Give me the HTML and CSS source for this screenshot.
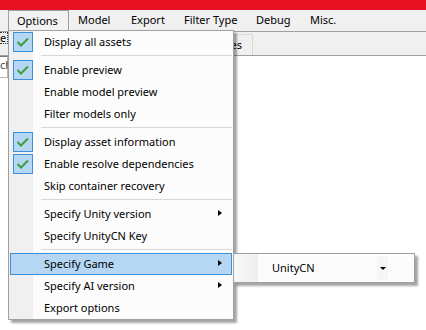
FILE: index.html
```html
<!DOCTYPE html>
<html>
<head>
<meta charset="utf-8">
<link rel="stylesheet" href="styles.css">
</head>
<body>
<div class="titlebar"></div>
<div class="menubar">
  <div class="mi mi-options open">Options</div>
  <div class="mi mi-model">Model</div>
  <div class="mi mi-export">Export</div>
  <div class="mi mi-filter">Filter Type</div>
  <div class="mi mi-debug">Debug</div>
  <div class="mi mi-misc">Misc.</div>
</div>
<div class="toolstrip">
  <div class="frag-tab"><span class="focus">e</span></div>
  <div class="tab">Classes</div>
</div>
<div class="content">
  <div class="search">ch</div>
</div>

<div class="dropdown">
  <div class="margin"></div>
  <div class="item"><span class="check"><svg width="18" height="18" viewBox="0 0 18 18"><polyline points="3.5,9 7,12.5 14,5.5" fill="none" stroke="#3d9e3d" stroke-width="2"/></svg></span><span class="label">Display all assets</span></div>
  <div class="sep"></div>
  <div class="item"><span class="check"><svg width="18" height="18" viewBox="0 0 18 18"><polyline points="3.5,9 7,12.5 14,5.5" fill="none" stroke="#3d9e3d" stroke-width="2"/></svg></span><span class="label">Enable preview</span></div>
  <div class="item"><span class="label">Enable model preview</span></div>
  <div class="item"><span class="label">Filter models only</span></div>
  <div class="sep"></div>
  <div class="item"><span class="check"><svg width="18" height="18" viewBox="0 0 18 18"><polyline points="3.5,9 7,12.5 14,5.5" fill="none" stroke="#3d9e3d" stroke-width="2"/></svg></span><span class="label">Display asset information</span></div>
  <div class="item"><span class="check"><svg width="18" height="18" viewBox="0 0 18 18"><polyline points="3.5,9 7,12.5 14,5.5" fill="none" stroke="#3d9e3d" stroke-width="2"/></svg></span><span class="label">Enable resolve dependencies</span></div>
  <div class="item"><span class="label">Skip container recovery</span></div>
  <div class="sep"></div>
  <div class="item"><span class="label">Specify Unity version</span><span class="arrow"></span></div>
  <div class="item"><span class="label">Specify UnityCN Key</span></div>
  <div class="sep"></div>
  <div class="item hot"><span class="label">Specify Game</span><span class="arrow"></span></div>
  <div class="item"><span class="label">Specify AI version</span><span class="arrow"></span></div>
  <div class="item"><span class="label">Export options</span></div>
</div>

<div class="submenu">
  <div class="sub-margin"></div>
  <div class="combo">
    <span class="combo-text">UnityCN</span>
    <span class="combo-btn"><span class="down"></span></span>
  </div>
</div>
</body>
</html>
```

FILE: styles.css
```css
html, body {
  margin: 0;
  padding: 0;
}
body {
  width: 426px;
  height: 330px;
  overflow: hidden;
  position: relative;
  background: #ffffff;
  font-family: "Noto Sans", "Open Sans", sans-serif;
  font-size: 11px;
  color: #000;
}
.titlebar {
  height: 10px;
  background: #e81123;
}
.menubar {
  height: 21px;
  background: #f0f0f0;
  display: flex;
  padding-left: 8px;
}
.mi {
  box-sizing: border-box;
  height: 21px;
  line-height: 19px;
  padding-left: 9px;
  white-space: nowrap;
}
.mi-options { width: 61px; }
.mi-model { width: 53px; }
.mi-export { width: 53px; }
.mi-filter { width: 72px; }
.mi-debug { width: 54px; }
.mi-misc { width: 46px; }
.mi.open {
  border: 1px solid #a0a0a0;
  border-bottom: none;
  background: #f2f2f2;
  padding-left: 8px;
  height: 22px;
}
.toolstrip {
  height: 23px;
  background: #f0f0f0;
  border-top: 1px solid #a0a0a0;
  border-bottom: 1px solid #a0a0a0;
  display: flex;
  align-items: flex-end;
  position: relative;
}
.frag-tab {
  width: 8px;
  height: 23px;
  display: flex;
  justify-content: flex-end;
  align-items: flex-start;
}
.focus {
  margin-top: 0;
  box-sizing: border-box;
  width: 8px;
  border: 1px dotted #333;
  border-left: none;
  height: 12px;
  line-height: 9px;
  white-space: nowrap;
}
.tab {
  margin-left: 186px;
  box-sizing: border-box;
  width: 59px;
  height: 21px;
  border: 1px solid #d9d9d9;
  border-bottom: none;
  text-align: right;
  padding-right: 10px;
  line-height: 20px;
  background: #f0f0f0;
}
.content {
  background: #fff;
  height: 274px;
}
.search {
  width: 8px;
  height: 22px;
  box-sizing: border-box;
  border: 1px solid #b5b5b5;
  border-left: none;
  border-top-color: #7a7a7a;
  line-height: 14px;
  padding-top: 1px;
  white-space: nowrap;
  color: #444;
}

/* dropdown */
.dropdown {
  position: absolute;
  left: 8px;
  top: 30px;
  width: 226px;
  box-sizing: border-box;
  border: 1px solid #a0a0a0;
  background: #fcfcfc;
  box-shadow: 3px 3px 2px rgba(0,0,0,0.35);
}
.dropdown .margin {
  position: absolute;
  left: 0;
  top: 0;
  bottom: 0;
  width: 24px;
  background: #f0f0f0;
}
.item {
  position: relative;
  height: 22px;
  display: flex;
  align-items: center;
  box-sizing: border-box;
  margin: 0 1px;
  border: 1px solid transparent;
}
.item.hot {
  background: #b5d7f3;
  border-color: #3d91d9;
}
.check {
  position: absolute;
  left: 2px;
  top: 0px;
  width: 18px;
  height: 18px;
  background: #b5d7f3;
  border: 1px solid #3d91d9;
}
.check svg {
  display: block;
}
.label {
  margin-left: 33px;
  white-space: nowrap;
  line-height: 20px;
}
.arrow {
  position: absolute;
  left: 207px;
  top: 6px;
  width: 0;
  height: 0;
  border-top: 3.5px solid transparent;
  border-bottom: 3.5px solid transparent;
  border-left: 4px solid #000;
}
.sep {
  height: 6px;
  position: relative;
}
.sep::after {
  content: "";
  position: absolute;
  left: 32px;
  right: 1px;
  top: 2px;
  height: 1px;
  background: #d7d7d7;
}

/* submenu */
.submenu {
  position: absolute;
  left: 233px;
  top: 253px;
  width: 182px;
  height: 30px;
  box-sizing: border-box;
  border: 1px solid #a0a0a0;
  background: #fcfcfc;
  box-shadow: 3px 3px 2px rgba(0,0,0,0.35);
  display: flex;
}
.sub-margin {
  width: 24px;
  background: linear-gradient(to right, #f7f7f7, #efefef);
}
.combo {
  flex: 1;
  display: flex;
  align-items: center;
  padding-left: 14px;
  position: relative;
}
.combo-text {
  flex: 1;
  line-height: 20px;
}
.combo-btn {
  width: 11px;
  height: 24px;
  margin-right: 26px;
  background: #f6f6f6;
  display: flex;
  align-items: center;
  justify-content: center;
}
.down {
  width: 0;
  height: 0;
  border-left: 3px solid transparent;
  border-right: 3px solid transparent;
  border-top: 3px solid #000;
}
```
